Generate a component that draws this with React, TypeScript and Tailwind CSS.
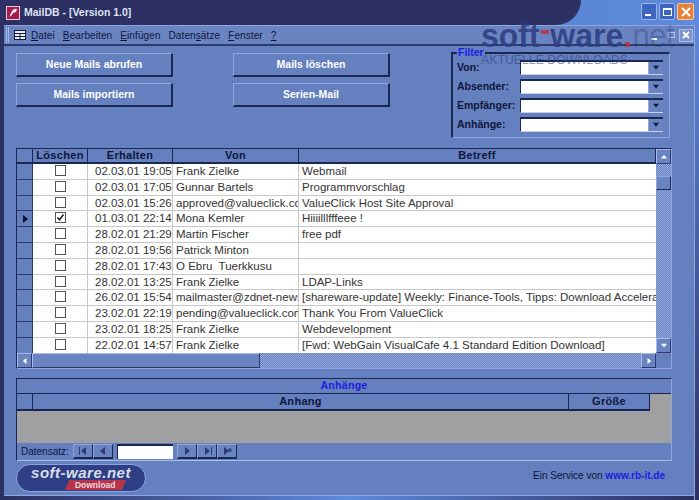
const menu = [
  ["D", "atei"],
  ["B", "earbeiten"],
  ["E", "infügen"],
  ["Datens", "ätze", "a"],
  ["F", "enster"],
  ["?", ""],
];

const rows = [
  { date: "02.03.01 19:05", from: "Frank Zielke", subject: "Webmail" },
  { date: "02.03.01 17:05", from: "Gunnar Bartels", subject: "Programmvorschlag" },
  { date: "02.03.01 15:26", from: "approved@valueclick.com", subject: "ValueClick Host Site Approval" },
  { date: "01.03.01 22:14", from: "Mona Kemler", subject: "Hiiiilllfffeee !", current: true },
  { date: "28.02.01 21:29", from: "Martin Fischer", subject: "free pdf" },
  { date: "28.02.01 19:56", from: "Patrick Minton", subject: "" },
  { date: "28.02.01 17:43", from: "O Ebru  Tuerkkusu", subject: "" },
  { date: "28.02.01 13:25", from: "Frank Zielke", subject: "LDAP-Links" },
  { date: "26.02.01 15:54", from: "mailmaster@zdnet-news.de", subject: "[shareware-update] Weekly: Finance-Tools, Tipps: Download Accelerator" },
  { date: "23.02.01 22:19", from: "pending@valueclick.com", subject: "Thank You From ValueClick" },
  { date: "23.02.01 18:25", from: "Frank Zielke", subject: "Webdevelopment" },
  { date: "22.02.01 14:57", from: "Frank Zielke", subject: "[Fwd: WebGain VisualCafe 4.1 Standard Edition Download]" },
];

const ui = "font-['Liberation_Sans',sans-serif]";
const raised = "border border-t-[#8ea5dd] border-l-[#8ea5dd] border-r-[#1c2653] border-b-[#1c2653] border-b-2 border-r-2";
const dither = "bg-[repeating-conic-gradient(#92a8de_0_25%,#6a84c2_0_50%)] bg-[length:2px_2px]";

function Arrow({ dir, className = "" }: { dir: "up" | "down" | "left" | "right"; className?: string }) {
  const points = { up: "4,1 8,6 0,6", down: "0,1 8,1 4,6", left: "6,0 6,8 1,4", right: "2,0 2,8 7,4" }[dir];
  return (
    <svg width="8" height="8" viewBox="0 0 8 8" className={className}>
      <polygon points={points} fill="currentColor" />
    </svg>
  );
}

function ActionButton({ label }: { label: string }) {
  return (
    <button className={`w-[157px] h-[24px] flex items-center justify-center bg-[#6480bf] text-white text-[10.5px] font-bold ${ui} ${raised}`}>
      {label}
    </button>
  );
}

function FilterRow({ label }: { label: string }) {
  return (
    <div className="flex items-center h-[19px]">
      <span className={`w-[63px] text-[10.5px] font-bold text-[#10163a] ${ui}`}>{label}</span>
      <div className="w-[143px] h-[15px] flex bg-white border-t-2 border-l border-[#1c2653] border-b border-b-[#c8d0e8]">
        <div className="flex-1" />
        <div className="w-[15px] flex items-center justify-center bg-[#6a84c2] text-[#10163a] border-l border-[#8ea5dd]">
          <Arrow dir="down" className="scale-75" />
        </div>
      </div>
    </div>
  );
}

function Row({ date, from, subject, current }: { date: string; from: string; subject: string; current?: boolean }) {
  return (
    <div className={`flex h-[15.8px] shrink-0 text-[11.5px] leading-[15px] text-[#333] ${ui}`}>
      <div className="w-[16px] flex items-center justify-center bg-[#6480bf] border-b border-r border-[#2c3a70] text-[#0a0f2a]">
        {current && <Arrow dir="right" />}
      </div>
      <div className="w-[55px] flex justify-center bg-white border-b border-r border-[#c8c8c8] pt-px">
        <div className="w-[11px] h-[11px] border border-[#555] bg-white flex items-center justify-center">
          {current && (
            <svg width="9" height="9" viewBox="0 0 9 9">
              <path d="M1.5 4.5 L3.5 6.8 L7.5 1.5" fill="none" stroke="#222" strokeWidth="1.6" />
            </svg>
          )}
        </div>
      </div>
      <div className="w-[85px] pl-[7px] bg-white border-b border-r border-[#c8c8c8] whitespace-nowrap overflow-hidden">{date}</div>
      <div className="w-[126px] pl-[3px] bg-white border-b border-r border-[#c8c8c8] whitespace-pre overflow-hidden">{from}</div>
      <div className="flex-1 pl-[3px] bg-white border-b border-[#c8c8c8] whitespace-nowrap overflow-hidden">{subject}</div>
    </div>
  );
}

function HeaderCell({ label, className }: { label: string; className: string }) {
  return (
    <div className={`flex items-center justify-center border-r border-[#1c2653] border-b-2 border-b-[#1c2653] text-[11px] font-bold text-[#10163a] tracking-[0.3px] ${ui} ${className}`}>
      {label}
    </div>
  );
}

function ScrollButton({ dir }: { dir: "up" | "down" | "left" | "right" }) {
  return (
    <div className="w-[15px] h-[15px] shrink-0 flex items-center justify-center bg-[#6a84c2] text-white border border-t-[#a9bbea] border-l-[#a9bbea] border-r-[#2c3a70] border-b-[#2c3a70]">
      <Arrow dir={dir} className="scale-75" />
    </div>
  );
}

function NavButton({ children }: { children: React.ReactNode }) {
  return (
    <div className="w-[20px] h-[15px] flex items-center justify-center bg-[#6a84c2] text-[#2c3a70] border border-t-[#8ea5dd] border-l-[#8ea5dd] border-r-[#1c2653] border-b-[#1c2653] border-b-2 text-[8px]">
      {children}
    </div>
  );
}

export default function App() {
  return (
    <div className="relative w-[699px] h-[500px] overflow-hidden flex flex-col bg-[#6480bf]">
      {/* title bar */}
      <div className="relative h-[25px] shrink-0 flex items-center bg-gradient-to-r from-[#4b6fc0] to-[#5f8adb]">
        <div className="absolute left-0 top-0 bottom-0 w-[581px] bg-[#2c3063] rounded-br-[34px]" />
        <div className="relative flex items-center pl-[6px] gap-[4px] flex-1">
          <div className="w-[14px] h-[14px] bg-[#a11d4e] border border-[#e7c7d2] flex items-center justify-center">
            <svg width="10" height="10" viewBox="0 0 10 10">
              <path d="M1 9 L4 3 Q6 0 9 1 L8 4 L5 5 L4 7 Z" fill="#f5e4ea" />
            </svg>
          </div>
          <span className={`text-[10.5px] font-bold text-[#dfe3f2] ${ui}`}>MailDB - [Version 1.0]</span>
        </div>
        <div className="relative flex gap-[2px] pr-[5px] pb-[2px]">
          <div className="w-[16px] h-[17px] rounded-[2px] bg-[#3d66c0] border border-[#9ab5ea] flex items-end p-[3px]">
            <div className="w-[6px] h-[2px] bg-white" />
          </div>
          <div className="w-[16px] h-[17px] rounded-[2px] bg-[#3d66c0] border border-[#9ab5ea] flex items-center justify-center">
            <div className="w-[9px] h-[8px] border border-t-2 border-white" />
          </div>
          <div className="w-[17px] h-[17px] rounded-[2px] bg-[#e8823a] border border-[#f6c79b] flex items-center justify-center text-white">
            <svg width="10" height="10" viewBox="0 0 10 10">
              <path d="M1 1 L9 9 M9 1 L1 9" stroke="currentColor" strokeWidth="2" />
            </svg>
          </div>
        </div>
      </div>

      <div className="flex-1 flex min-h-0">
        <div className="w-[4px] bg-[#2c3063] shrink-0" />
        <div className="flex-1 min-w-0 flex flex-col">
          {/* menu bar */}
          <div className="h-[21px] shrink-0 flex items-center bg-[#6a84c2] border-t border-[#8ea5dd] border-b-2 border-b-[#2c3a70]">
            <div className="w-[3px] h-[16px] ml-[2px] bg-[#6a84c2] border-l border-r border-[#a9bbea]" />
            <svg width="12" height="10" viewBox="0 0 12 10" className="ml-[5px]">
              <rect x="0.5" y="0.5" width="11" height="9" fill="#e8ecf6" stroke="#141a3c" />
              <path d="M0 3.5H12M6 3.5V10M0 6.5H12" stroke="#141a3c" />
            </svg>
            <div className={`flex gap-[8px] ml-[5px] text-[10px] tracking-[0.1px] text-[#10163a] ${ui}`}>
              {menu.map((m) => (
                <span key={m[0]} className="whitespace-nowrap">
                  {m[0] === "Datens" ? (
                    <>
                      Daten<span className="underline">s</span>ätze
                    </>
                  ) : (
                    <>
                      <span className="underline">{m[0]}</span>
                      {m[1]}
                    </>
                  )}
                </span>
              ))}
            </div>
            <div className="ml-auto mr-[1px] flex gap-px">
              <div className="w-[14px] h-[13px] bg-[#6a84c2] flex items-end p-[2px]">
                <div className="w-[6px] h-[2px] bg-white" />
              </div>
              <div className="w-[14px] h-[13px] bg-[#6a84c2] flex items-center justify-center">
                <div className="w-[7px] h-[6px] border border-[#b9c6ea]" />
              </div>
              <div className="w-[14px] h-[13px] bg-[#7d94cf] border border-[#a9bbea] flex items-center justify-center text-white">
                <svg width="8" height="8" viewBox="0 0 8 8">
                  <path d="M1 1 L7 7 M7 1 L1 7" stroke="currentColor" strokeWidth="1.8" />
                </svg>
              </div>
            </div>
          </div>

          {/* form */}
          <div className="flex-1 min-h-0 flex flex-col pl-[12px] pr-[22px] pt-[6px]">
            <div className="h-[96px] shrink-0 flex">
              <div className="pt-px flex flex-col gap-[6px]">
                <ActionButton label="Neue Mails abrufen" />
                <ActionButton label="Mails importiern" />
              </div>
              <div className="pt-px ml-[60px] flex flex-col gap-[6px]">
                <ActionButton label="Mails löschen" />
                <ActionButton label="Serien-Mail" />
              </div>
              <div className="relative ml-[61px] w-[219px] h-[86px] border-l-2 border-t-2 border-[#1c2653] border-r border-b border-r-[#8ea5dd] border-b-[#8ea5dd] pl-[4px] pt-[4px]">
                <span className={`absolute left-[4px] -top-[8px] bg-[#6480bf] px-px text-[10.5px] font-bold leading-[12px] text-[#1a1ee0] ${ui}`}>Filter</span>
                <FilterRow label="Von:" />
                <FilterRow label="Absender:" />
                <FilterRow label="Empfänger:" />
                <FilterRow label="Anhänge:" />
              </div>
            </div>

            {/* mail grid */}
            <div className="h-[221px] shrink-0 w-[656px] flex flex-col border-t border-l border-[#1c2653] border-r border-r-[#8ea5dd] border-b border-b-[#8ea5dd]">
              <div className="flex-1 min-h-0 flex">
                <div className="flex-1 min-w-0 flex flex-col overflow-hidden">
                  <div className="h-[15px] shrink-0 flex bg-[#6480bf]">
                    <HeaderCell label="" className="w-[16px]" />
                    <HeaderCell label="Löschen" className="w-[55px]" />
                    <HeaderCell label="Erhalten" className="w-[85px]" />
                    <HeaderCell label="Von" className="w-[126px]" />
                    <HeaderCell label="Betreff" className="flex-1" />
                  </div>
                  {rows.map((r) => (
                    <Row key={r.date} {...r} />
                  ))}
                </div>
                <div className={`w-[15px] shrink-0 flex flex-col ${dither}`}>
                  <ScrollButton dir="up" />
                  <div className="h-[14px] mt-[12px] bg-[#6a84c2] border border-t-[#8ea5dd] border-l-[#8ea5dd] border-r-[#1c2653] border-b-[#1c2653]" />
                  <div className="flex-1" />
                  <ScrollButton dir="down" />
                </div>
              </div>
              <div className="h-[15px] shrink-0 flex">
                <ScrollButton dir="left" />
                <div className="w-[228px] h-[15px] bg-[#6a84c2] border border-t-[#a9bbea] border-l-[#a9bbea] border-r-[#2c3a70] border-b-[#2c3a70]" />
                <div className={`flex-1 ${dither}`} />
                <ScrollButton dir="right" />
                <div className="w-[15px] bg-[#6480bf]" />
              </div>
            </div>

            {/* attachments */}
            <div className="mt-[9px] h-[83px] shrink-0 w-[656px] flex flex-col border-t border-l border-[#1c2653] border-r border-r-[#8ea5dd] border-b border-b-[#a9bbea]">
              <div className={`h-[15px] shrink-0 flex items-center justify-center text-[10.5px] font-bold tracking-[0.3px] text-[#1a1ee0] border-b border-[#1c2653] ${ui}`}>Anhänge</div>
              <div className="flex-1 min-h-0 bg-[#a0a0a2] flex flex-col">
                <div className="h-[17px] shrink-0 flex">
                  <div className="w-[16px] bg-[#6480bf] border-r border-b-2 border-[#1c2653]" />
                  <HeaderCell label="Anhang" className="w-[536px] bg-[#6480bf]" />
                  <HeaderCell label="Größe" className="w-[81px] bg-[#6480bf]" />
                </div>
              </div>
              <div className="h-[17px] shrink-0 flex items-center bg-[#6480bf]">
                <span className={`ml-[4px] w-[52px] text-[10px] text-[#10163a] ${ui}`}>Datensatz:</span>
                <NavButton>
                  <span className="flex items-center">
                    <span className="w-px h-[8px] bg-current" />
                    <Arrow dir="left" />
                  </span>
                </NavButton>
                <NavButton>
                  <Arrow dir="left" />
                </NavButton>
                <div className="w-[56px] h-[15px] ml-[4px] bg-white border-t-2 border-l border-[#1c2653]" />
                <div className="w-[4px]" />
                <NavButton>
                  <Arrow dir="right" />
                </NavButton>
                <NavButton>
                  <span className="flex items-center">
                    <Arrow dir="right" />
                    <span className="w-px h-[8px] bg-current" />
                  </span>
                </NavButton>
                <NavButton>
                  <span className="flex items-center">
                    <Arrow dir="right" />
                    <span className="-ml-[2px] text-[9px] leading-none font-bold">*</span>
                  </span>
                </NavButton>
              </div>
            </div>

            {/* footer */}
            <div className="flex-1 min-h-0 flex items-start justify-between pr-[7px]">
              <div className="mt-[3px] w-[130px] h-[28px] rounded-[14px] bg-[#2f3f86] border border-[#8ea5dd] flex flex-col items-center overflow-hidden">
                <span className={`italic font-bold text-[15px] leading-[15px] tracking-[0.5px] text-[#d9deee] ${ui}`}>soft-ware.net</span>
                <span className="ml-[28px] px-[8px] -skew-x-[24deg] bg-[#b8344c] h-[10px] flex items-center">
                  <span className={`skew-x-[24deg] font-bold text-[8.5px] leading-none text-[#e8d8dc] ${ui}`}>Download</span>
                </span>
              </div>
              <div className={`mt-[7px] text-[10px] text-[#10163a] whitespace-nowrap ${ui}`}>
                Ein Service von <span className="font-bold text-[#1a1ee0]">www.rb-it.de</span>
              </div>
            </div>
          </div>

          <div className="h-[5px] shrink-0 border-t border-[#8ea5dd] bg-gradient-to-r from-[#2c3063] via-[#5f8adb] to-[#2c3063]" />
        </div>
        <div className="w-[5px] shrink-0 bg-gradient-to-b from-[#5f8adb] to-[#2c3063] border-l border-[#8ea5dd]" />
      </div>

      {/* site watermark over the screenshot */}
      <div className={`absolute left-[481px] top-[19px] pointer-events-none ${ui}`}>
        <div className="font-bold text-[32px] leading-[32px] whitespace-nowrap text-[#2f3d80]/90 origin-top scale-y-105">
          soft<span className="relative -top-[6px] text-[#b8344c]/90">-</span>ware<span className="text-[#b8344c]/90">.</span>
          <span className="font-normal tracking-[-1px] text-[#2c3a78]/35">net</span>
        </div>
        <div className="mt-[2px] text-[12.3px] leading-[14px] whitespace-nowrap text-[#2c3a78]/55">AKTUELLE DOWNLOADS</div>
      </div>
    </div>
  );
}
